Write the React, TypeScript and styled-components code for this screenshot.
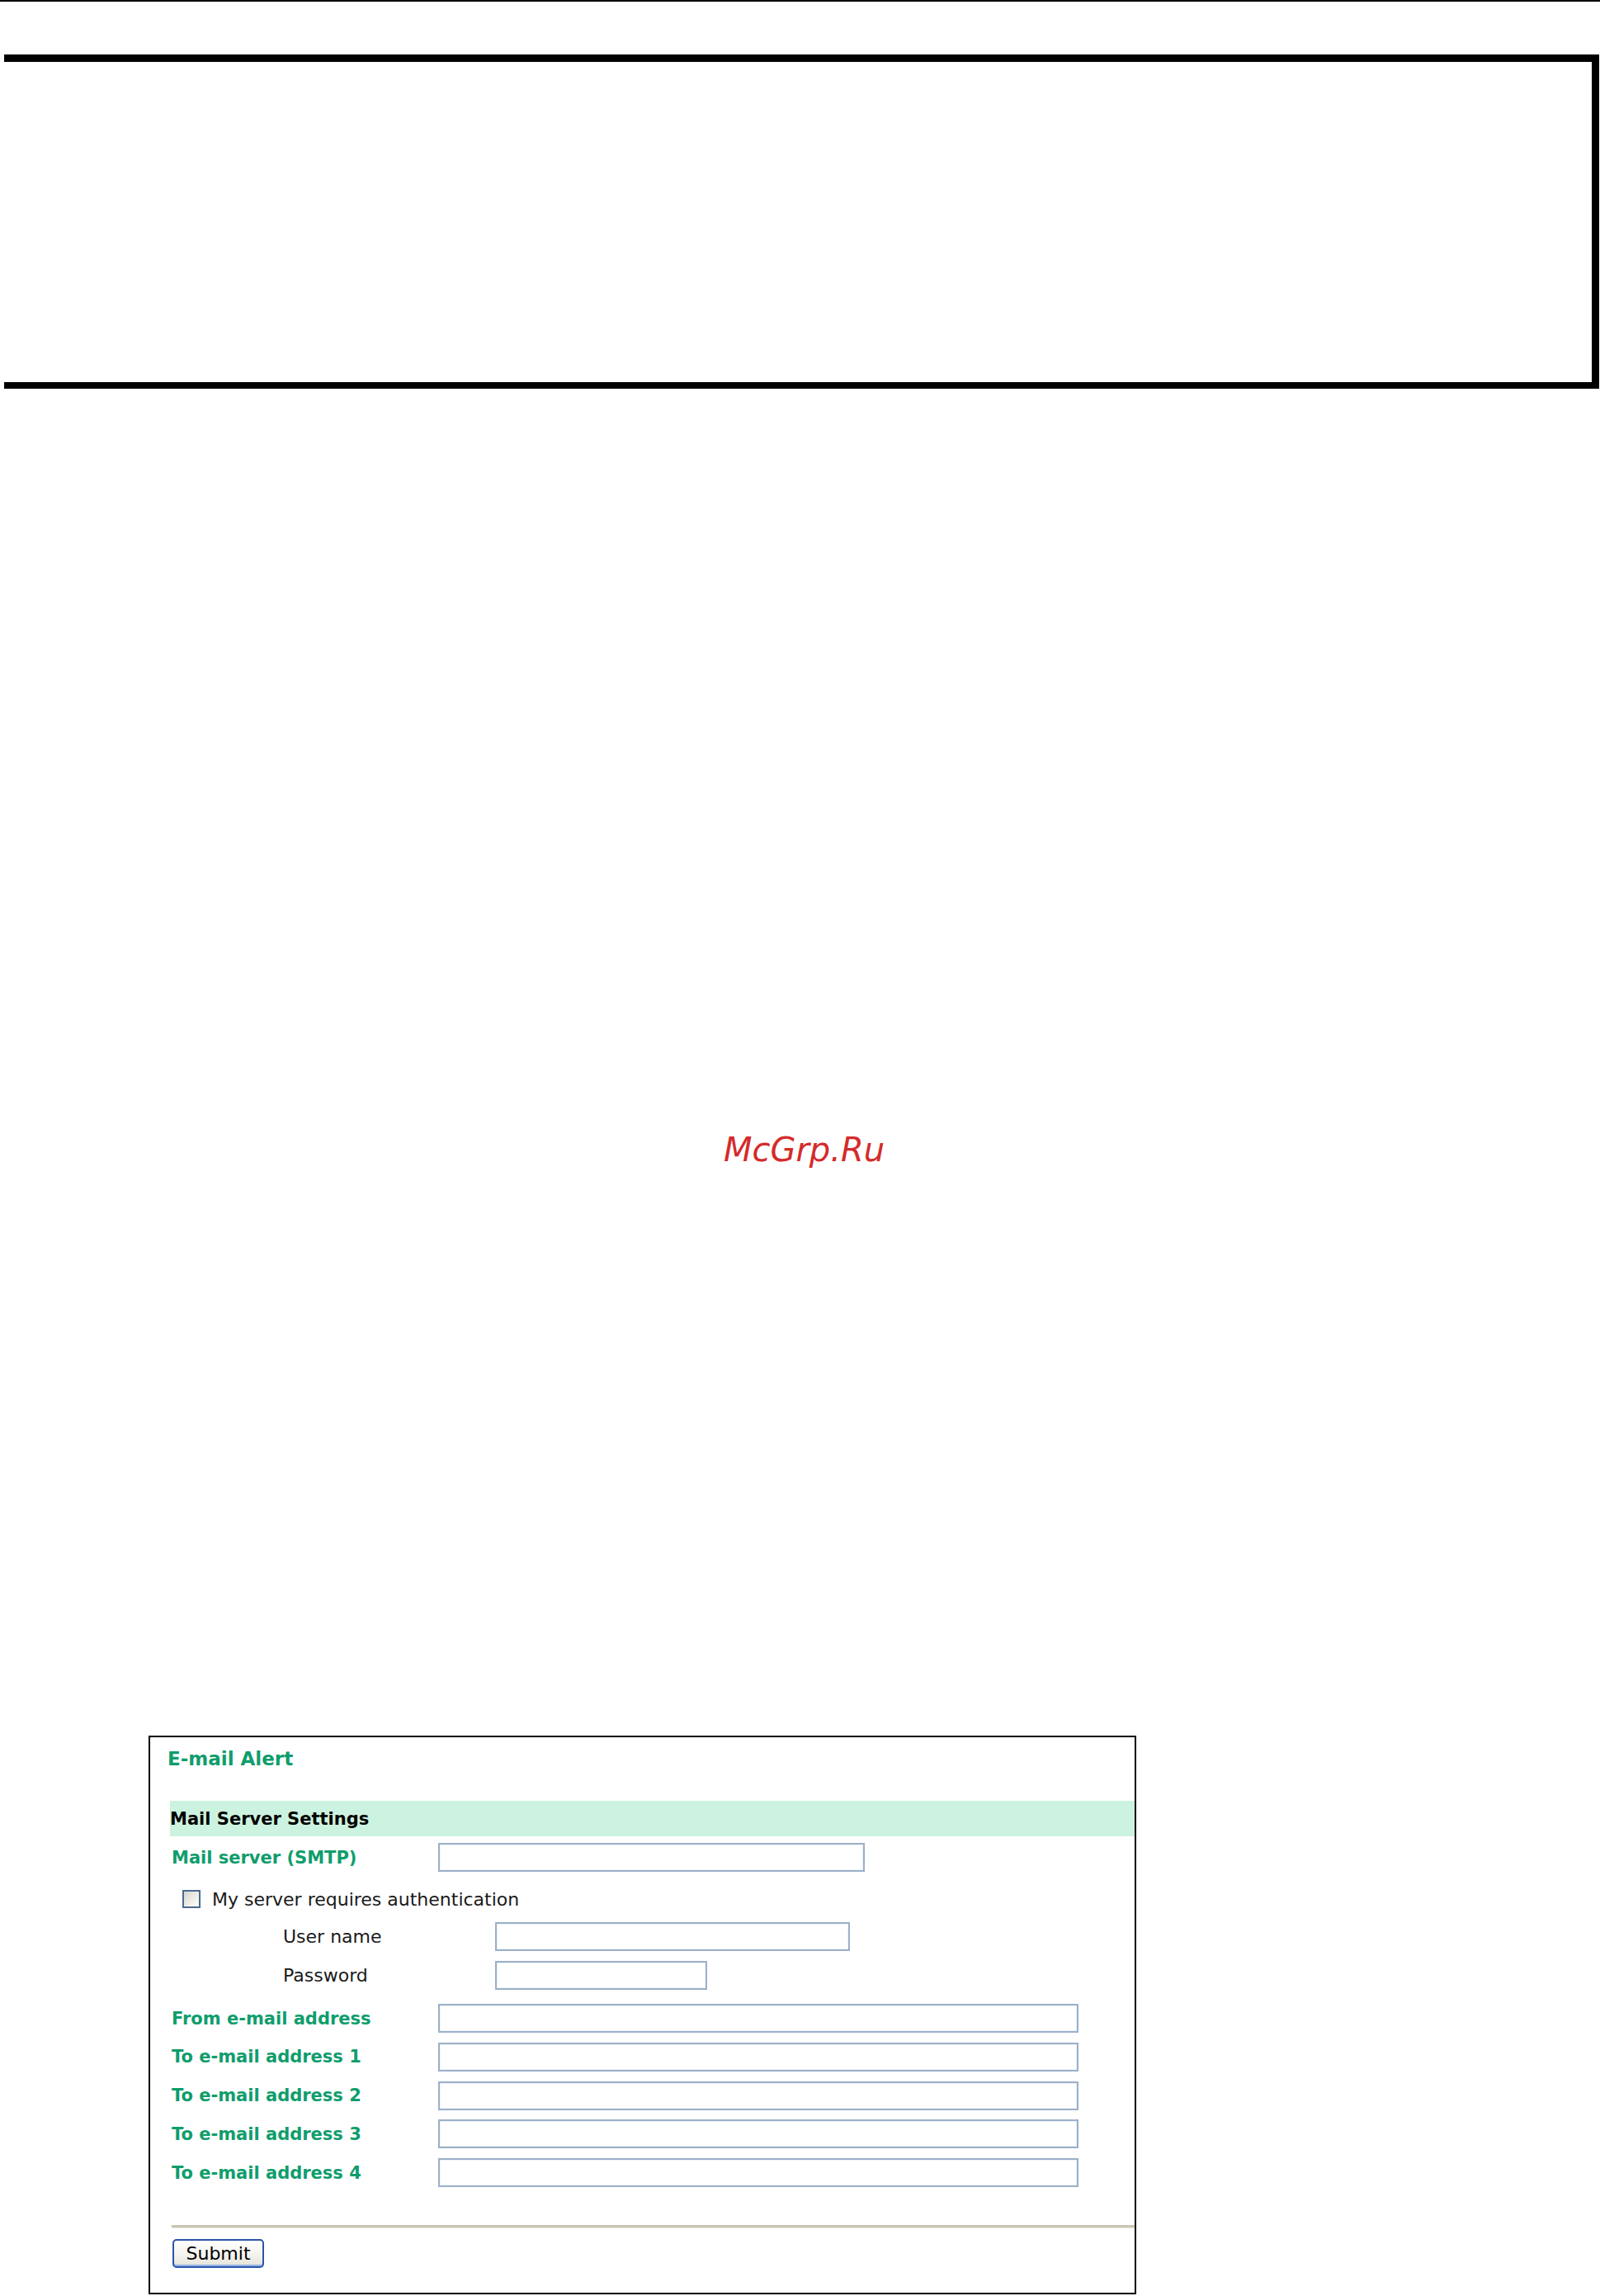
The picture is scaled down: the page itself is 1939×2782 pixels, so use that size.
import React from "react";
import styled, { createGlobalStyle } from "styled-components";

const GlobalStyle = createGlobalStyle`
  html, body {
    margin: 0;
    padding: 0;
    background: #ffffff;
  }
  body {
    font-family: "DejaVu Sans", Verdana, sans-serif;
    color: #111111;
  }
  * { box-sizing: border-box; }
`;

const GREEN = "#0f9d6c";

const Page = styled.div`
  width: 1939px;
  height: 2782px;
  overflow: hidden;
`;

const TopRule = styled.div`
  height: 2px;
  background: #000000;
`;

const Frame = styled.div`
  margin: 64px 0 0 5px;
  width: 1933px;
  height: 405px;
  border-top: 9px solid #000000;
  border-right: 9px solid #000000;
  border-bottom: 8px solid #000000;
`;

const Watermark = styled.div`
  margin-top: 897px;
  height: 50px;
  line-height: 50px;
  text-align: center;
  padding-left: 10px;
  font-family: "DejaVu Sans", sans-serif;
  font-style: oblique;
  font-size: 40px;
  color: #d42b2b;
`;

const Panel = styled.section`
  margin: 685px 0 0 180px;
  width: 1197px;
  border: 2px solid #000000;
  display: flex;
  flex-direction: column;
  padding-bottom: 30px;
`;

const PanelTitle = styled.h1`
  margin: 0;
  height: 51px;
  padding-left: 21px;
  display: flex;
  align-items: center;
  font-size: 23px;
  font-weight: bold;
  color: ${GREEN};
`;

const SectionBand = styled.div`
  margin: 26px 0 0 24px;
  height: 43px;
  display: flex;
  align-items: center;
  background: #ccf3df;
  font-size: 21px;
  font-weight: bold;
  color: #000000;
`;

const FieldRow = styled.div<{ $mt: number; $indent: number }>`
  margin-top: ${(p) => p.$mt}px;
  padding-left: ${(p) => p.$indent}px;
  height: 35px;
  display: flex;
  align-items: center;
`;

const FieldLabel = styled.label<{ $width: number; $main?: boolean }>`
  width: ${(p) => p.$width}px;
  flex: none;
  font-size: ${(p) => (p.$main ? 21 : 22)}px;
  font-weight: ${(p) => (p.$main ? "bold" : "normal")};
  color: ${(p) => (p.$main ? GREEN : "#1a1a1a")};
  white-space: nowrap;
`;

const TextInput = styled.input<{ $width: number }>`
  width: ${(p) => p.$width}px;
  height: 35px;
  margin: 0;
  padding: 0 4px;
  border: 2px solid #9cb0c9;
  box-shadow: inset 0 0 0 1px #eef2f7;
  background: #ffffff;
  font-family: "DejaVu Sans", sans-serif;
  font-size: 20px;
  outline: none;
`;

const CheckRow = styled.label`
  margin: 22px 0 0 39px;
  height: 22px;
  display: flex;
  align-items: center;
  gap: 14px;
  font-size: 22px;
  color: #1a1a1a;
`;

const CheckBox = styled.span`
  width: 22px;
  height: 22px;
  flex: none;
  border: 2px solid #4b6b90;
  background: linear-gradient(135deg, #d6d6ce 0%, #f0f0ea 60%, #ffffff 100%);
`;

const Divider = styled.hr`
  margin: 46px 0 0 26px;
  height: 3px;
  border: 0;
  background: #cac6b3;
  box-shadow: 0 1px 0 #e8e6dc;
`;

const SubmitButton = styled.button`
  margin: 14px 0 0 27px;
  width: 111px;
  height: 35px;
  align-self: flex-start;
  padding: 0;
  border: 2px solid #2a55a8;
  border-radius: 5px;
  background: linear-gradient(180deg, #ffffff 0%, #f4f3ee 55%, #e3e2da 100%);
  box-shadow: inset 0 -2px 0 #8fb0e6, inset 0 2px 0 #ffffff;
  font-family: "DejaVu Sans", sans-serif;
  font-size: 22px;
  color: #000000;
  line-height: 1;
`;

type Field = { label: string; width: number; mt: number };

const addressFields: Field[] = [
  { label: "From e-mail address", width: 776, mt: 17 },
  { label: "To e-mail address 1", width: 776, mt: 11.75 },
  { label: "To e-mail address 2", width: 776, mt: 11.75 },
  { label: "To e-mail address 3", width: 776, mt: 11.75 },
  { label: "To e-mail address 4", width: 776, mt: 11.75 },
];

export default function App() {
  return (
    <Page>
      <GlobalStyle />
      <TopRule />
      <Frame />
      <Watermark>McGrp.Ru</Watermark>
      <Panel>
        <PanelTitle>E-mail Alert</PanelTitle>
        <SectionBand>Mail Server Settings</SectionBand>
        <FieldRow $mt={8} $indent={26}>
          <FieldLabel $width={323} $main>
            Mail server (SMTP)
          </FieldLabel>
          <TextInput $width={517} />
        </FieldRow>
        <CheckRow>
          <CheckBox />
          My server requires authentication
        </CheckRow>
        <FieldRow $mt={17} $indent={161}>
          <FieldLabel $width={257}>User name</FieldLabel>
          <TextInput $width={430} />
        </FieldRow>
        <FieldRow $mt={12} $indent={161}>
          <FieldLabel $width={257}>Password</FieldLabel>
          <TextInput $width={257} type="password" />
        </FieldRow>
        {addressFields.map((f) => (
          <FieldRow key={f.label} $mt={f.mt} $indent={26}>
            <FieldLabel $width={323} $main>
              {f.label}
            </FieldLabel>
            <TextInput $width={f.width} />
          </FieldRow>
        ))}
        <Divider />
        <SubmitButton type="button">Submit</SubmitButton>
      </Panel>
    </Page>
  );
}
